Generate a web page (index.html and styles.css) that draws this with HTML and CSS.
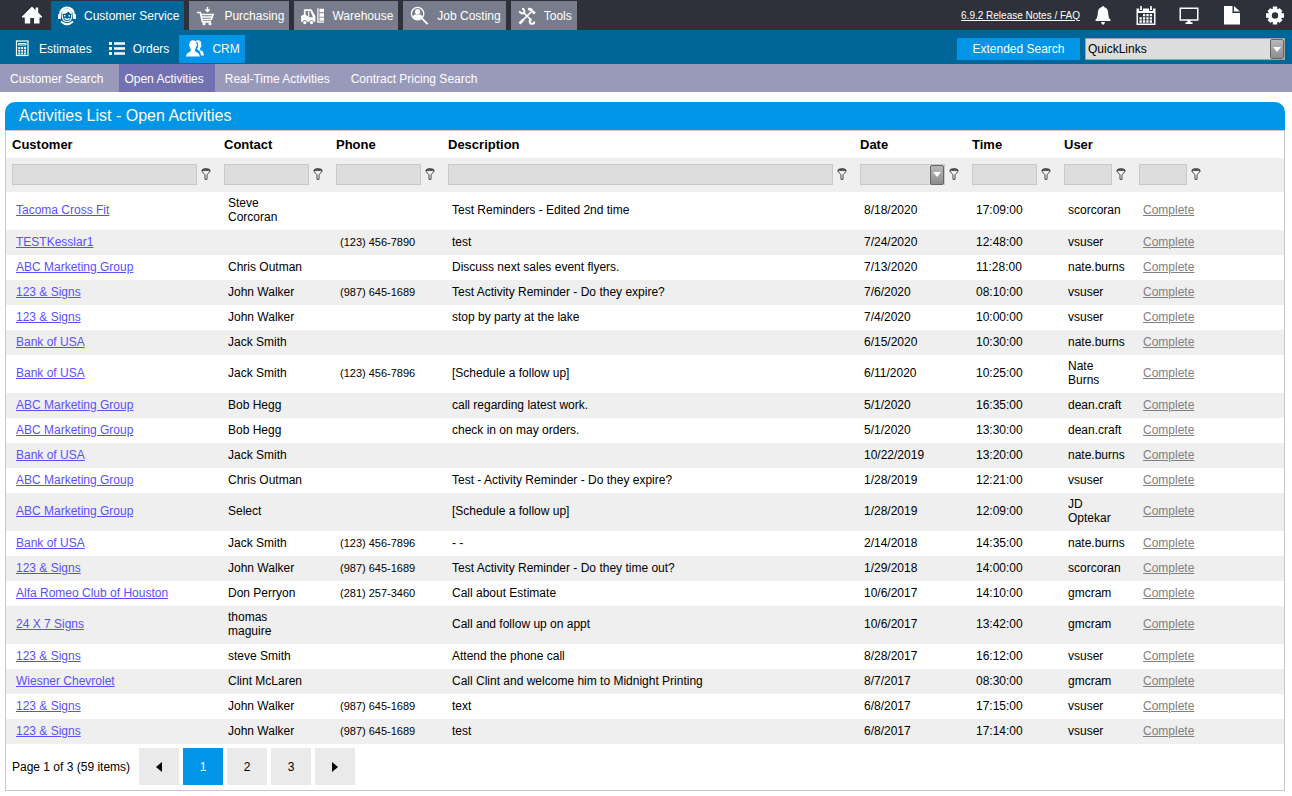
FILE: index.html
```html
<!DOCTYPE html>
<html lang="en">
<head>
    <meta charset="UTF-8">
    <meta name="viewport" content="width=device-width, initial-scale=1.0">
    <title>Open Activities</title>
    <link rel="stylesheet" href="styles.css">
</head>
<body>
    <!-- shared symbols -->
    <svg class="symbols" aria-hidden="true">
        <symbol id="filter" viewBox="0 0 10 12">
            <ellipse cx="5" cy="2.6" rx="4.2" ry="2" fill="#555" stroke="#444" stroke-width="0.8"/>
            <path d="M0.8 3L4 6.8v4.6h2V6.8L9.2 3" fill="#fff" stroke="#444" stroke-width="1"/>
            <path d="M2.5 3.2q2.5 1.6 5 0" fill="none" stroke="#ddd" stroke-width="0.8"/>
        </symbol>
    </svg>

    <header class="topbar">
        <a class="home" href="#" aria-label="Home">
            <svg width="20" height="18" viewBox="0 0 20 18"><path fill="#fff" d="M10 0.500l3.600 3.700V1.500h2.600v5L20 10.500v1h-2.500v6H12V12H8.200v5.500H2.800v-6H0v-1z"/></svg>
        </a>
        <nav class="tabs">
            <a class="tab active" href="#">
                <svg width="18" height="20" viewBox="0 0 18 20" fill="none" stroke="#fff">
                    <path d="M2.300 9V8a6.700 6.500 0 0 1 13.400 0v1" stroke-width="2.200"/>
                    <path d="M4.500 7.500q4 .2 6-2.500 1 2 3 2.500l-.5-3L9 3 5 4.500z" fill="#fff" stroke-width="1"/>
                    <path d="M1.500 8v5M16.500 8v5" stroke-width="2.800"/>
                    <path d="M4.300 8.500v2.500q.7 4.500 4.700 4.500t4.700-4.500V8.500" stroke-width="1.200"/>
                    <path d="M6.500 12.300q2.500 2.400 5 0" stroke-width="1.200"/>
                    <path d="M6.800 9v1.500M11.200 9v1.500" stroke-width="1.300"/>
                    <path d="M3 15.500q6 5.500 12 0" stroke-width="1.700"/>
                </svg>
                Customer Service
            </a>
            <a class="tab" href="#">
                <svg width="20" height="20" viewBox="0 0 20 20" fill="none" stroke="#fff">
                    <path d="M11.500 1v4.500M9.300 3.500l2.200 2 2.200-2" stroke-width="1.500"/>
                    <path d="M1 6.500h3.300l2.200 9.300h8.500" stroke-width="1.700"/>
                    <path d="M4.800 8.500H17l-1.600 5H6.200M5.500 11h10.700" stroke-width="1.700"/>
                    <circle cx="8" cy="17.800" r="1.500" fill="#fff" stroke="none"/>
                    <circle cx="14" cy="17.800" r="1.500" fill="#fff" stroke="none"/>
                </svg>
                Purchasing
            </a>
            <a class="tab" href="#">
                <svg width="23" height="20" viewBox="0 0 24 20">
                    <path fill="#fff" fill-rule="evenodd" d="M3 3h8l4 7v6h-1.800a2.400 2.400 0 0 0-4.400 0H6.300a2.400 2.400 0 0 0-4.600 0H0V10l3-1.500zM4.800 4.700v4l3.700 2.600h4L9.800 4.700z"/>
                    <path stroke="#fff" stroke-width="1.200" d="M8 5v6"/>
                    <circle cx="4" cy="16.800" r="1.700" fill="#fff"/><circle cx="11" cy="16.800" r="1.700" fill="#fff"/>
                    <path fill="#fff" d="M17 2h1.300v13.700H24V17h-7zM19.300 2.500H24v3.700h-4.700zM19.300 7H24v3.700h-4.700zM19.300 11.500H24v3.500h-4.700z"/>
                </svg>
                Warehouse
            </a>
            <a class="tab" href="#">
                <svg width="19" height="20" viewBox="0 0 20 20">
                    <circle cx="8" cy="7.500" r="6.500" fill="none" stroke="#fff" stroke-width="1.400"/>
                    <circle cx="8" cy="5.500" r="2.800" fill="#fff"/>
                    <path fill="#fff" d="M3 11.500q0-2.500 3-3h4q3 .5 3 3-4 4.500-10 0z"/>
                    <path stroke="#fff" stroke-width="1.900" d="M12.500 12.500l6 6"/>
                </svg>
                Job Costing
            </a>
            <a class="tab" href="#">
                <svg width="18" height="20" viewBox="0 0 18 20" fill="none" stroke="#fff">
                    <path stroke-width="1.700" d="M5 6l8.500 8.500M2 17L13 6"/>
                    <path stroke-width="2" d="M4 2.800A2.300 2.300 0 1 1 1.800 5M16.300 15.500A2.300 2.300 0 1 1 13.500 13.300"/>
                    <path stroke-width="2.600" d="M10 3.200q3.500-.5 4.300 2.300l2.700 1.800"/>
                    <path stroke-width="2.500" d="M1.500 17.500l4-4"/>
                </svg>
                Tools
            </a>
        </nav>
        <div class="tools">
            <a class="release" href="#">6.9.2 Release Notes / FAQ</a>
            <button class="icon-btn" aria-label="Notifications">
                <svg width="20" height="20" viewBox="0 0 20 20"><path fill="#fff" d="M9 1a1 1 0 0 1 2 0q4 1 4.200 6 .2 5 2.300 6.800V15h-15v-1.200Q4.600 12 4.800 7 5 2 9 1zM8 16h4l-1 2.500H9z"/></svg>
            </button>
            <button class="icon-btn" aria-label="Calendar">
                <svg width="20" height="20" viewBox="0 0 20 20">
                    <path fill="#fff" d="M.5 2.500h19V19H.5z"/>
                    <path fill="#2e313a" d="M2 7h16v10.500H2z"/>
                    <path stroke="#2e313a" d="M3.500 2v2.500h3V2M13.500 2v2.500h3V2" fill="none"/>
                    <path stroke="#fff" stroke-width="1.600" d="M5 0v3.500M15 0v3.500"/>
                    <path stroke="#fff" stroke-width="2.300" stroke-dasharray="2.300 1.100" d="M7 9.200h10M3.500 12.400h13.500M3.500 15.500h13.500"/>
                </svg>
            </button>
            <button class="icon-btn" aria-label="Display">
                <svg width="20" height="20" viewBox="0 0 20 20"><path fill="#fff" fill-rule="evenodd" d="M.5 1.500h19v13.300h-8v1.500h2V18h-7v-1.700h2v-1.500h-8zM2 3v10.300h16V3z"/></svg>
            </button>
            <button class="icon-btn" aria-label="Documents">
                <svg width="20" height="20" viewBox="0 0 20 20"><path fill="#fff" d="M2 0h8.500v7H18v11.500H2zM12 0l6 5.500h-6z"/></svg>
            </button>
            <button class="icon-btn" aria-label="Settings">
                <svg width="20" height="20" viewBox="0 0 20 20">
                    <g stroke="#fff" stroke-width="4.400"><path d="M10 .5v18M1 9.500h18M4 3.500l12 12M16 3.500l-12 12"/></g>
                    <circle cx="10" cy="9.500" r="7" fill="#fff"/><circle cx="10" cy="9.500" r="3.200" fill="#2e313a"/>
                </svg>
            </button>
        </div>
    </header>

    <div class="subbar">
        <nav class="tabs">
            <a class="sub" href="#">
                <svg width="17" height="18" viewBox="0 0 17 18">
                    <rect x="2.500" y="1" width="11.500" height="14.500" fill="none" stroke="#fff" stroke-width="1.200"/>
                    <path stroke="#fff" d="M4.500 3.500h7.500v1.500h-7.500z" fill="none"/>
                    <path stroke="#fff" stroke-width="1.900" stroke-dasharray="1.900 1" d="M4.300 8h8M4.300 10.800h8M4.300 13.500h8"/>
                </svg>
                Estimates
            </a>
            <a class="sub" href="#">
                <svg width="16" height="18" viewBox="0 0 16 18"><path fill="#fff" d="M0 2h3v3H0zM5 2.300h11v2.400H5zM0 7h3v3H0zM5 7.300h11v2.400H5zM0 12h3v3H0zM5 12.300h11v2.400H5z"/></svg>
                Orders
            </a>
            <a class="sub active" href="#">
                <svg width="18" height="18" viewBox="0 0 18 18" fill="#fff">
                    <path d="M9.500 1.500q1-1.500 3-1.200 3.200.5 2.500 4.200l.5 1q0 1.500-1 2l-.7 1.600q.5 1.600 3.200 2.400l1 4h-3L14 11.500l-3-2.500q2-3 .5-6.500z"/>
                    <path d="M3.500 4Q3.500.3 7 .3T10.500 4q.8.500.3 1.800l-.7 1Q10 8.600 9 9.600q-.3 1.600 1.300 2.300 3.200 1 3.500 4.600H0q.2-3.500 3.500-4.600 1.800-.8 1.400-2.300-1-1-1.200-2.800l-.6-1q-.3-1.300.4-1.800z"/>
                </svg>
                CRM
            </a>
        </nav>
        <div class="search">
            <button class="ext-btn">Extended Search</button>
            <div class="quick">
                <select aria-label="QuickLinks">
                    <option>QuickLinks</option>
                </select>
                <span class="drop"></span>
            </div>
        </div>
    </div>

    <nav class="menu">
        <a href="#">Customer Search</a>
        <a class="active" href="#">Open Activities</a>
        <a href="#">Real-Time Activities</a>
        <a href="#">Contract Pricing Search</a>
    </nav>

    <main class="panel">
        <h1>Activities List - Open Activities</h1>
        <div class="grid">
            <table>
                <colgroup>
                    <col class="c-customer"><col class="c-mid"><col class="c-mid"><col>
                    <col class="c-mid"><col class="c-time"><col class="c-user"><col class="c-action">
                </colgroup>
                <thead>
                    <tr>
                        <th>Customer</th>
                        <th>Contact</th>
                        <th>Phone</th>
                        <th>Description</th>
                        <th>Date</th>
                        <th>Time</th>
                        <th>User</th>
                        <th></th>
                    </tr>
                    <tr class="filters" id="filters"></tr>
                </thead>
                <tbody id="rows"></tbody>
            </table>
            <div class="pager">
                <span>Page 1 of 3 (59 items)</span>
                <button aria-label="Previous"><svg width="6" height="10" viewBox="0 0 6 10"><path d="M6 0v10L0 5z"/></svg></button>
                <button class="current">1</button>
                <button>2</button>
                <button>3</button>
                <button aria-label="Next"><svg width="6" height="10" viewBox="0 0 6 10"><path d="M0 0v10l6-5z"/></svg></button>
            </div>
        </div>
    </main>

    <script>
        // customer, contact, phone, description, date, time, user
        const activities = [
            ['Tacoma Cross Fit', 'Steve Corcoran', '', 'Test Reminders - Edited 2nd time', '8/18/2020', '17:09:00', 'scorcoran'],
            ['TESTKesslar1', '', '(123) 456-7890', 'test', '7/24/2020', '12:48:00', 'vsuser'],
            ['ABC Marketing Group', 'Chris Outman', '', 'Discuss next sales event flyers.', '7/13/2020', '11:28:00', 'nate.burns'],
            ['123 & Signs', 'John Walker', '(987) 645-1689', 'Test Activity Reminder - Do they expire?', '7/6/2020', '08:10:00', 'vsuser'],
            ['123 & Signs', 'John Walker', '', 'stop by party at the lake', '7/4/2020', '10:00:00', 'vsuser'],
            ['Bank of USA', 'Jack Smith', '', '', '6/15/2020', '10:30:00', 'nate.burns'],
            ['Bank of USA', 'Jack Smith', '(123) 456-7896', '[Schedule a follow up]', '6/11/2020', '10:25:00', 'Nate Burns'],
            ['ABC Marketing Group', 'Bob Hegg', '', 'call regarding latest work.', '5/1/2020', '16:35:00', 'dean.craft'],
            ['ABC Marketing Group', 'Bob Hegg', '', 'check in on may orders.', '5/1/2020', '13:30:00', 'dean.craft'],
            ['Bank of USA', 'Jack Smith', '', '', '10/22/2019', '13:20:00', 'nate.burns'],
            ['ABC Marketing Group', 'Chris Outman', '', 'Test - Activity Reminder - Do they expire?', '1/28/2019', '12:21:00', 'vsuser'],
            ['ABC Marketing Group', 'Select', '', '[Schedule a follow up]', '1/28/2019', '12:09:00', 'JD Optekar'],
            ['Bank of USA', 'Jack Smith', '(123) 456-7896', '- -', '2/14/2018', '14:35:00', 'nate.burns'],
            ['123 & Signs', 'John Walker', '(987) 645-1689', 'Test Activity Reminder - Do they time out?', '1/29/2018', '14:00:00', 'scorcoran'],
            ['Alfa Romeo Club of Houston', 'Don Perryon', '(281) 257-3460', 'Call about Estimate', '10/6/2017', '14:10:00', 'gmcram'],
            ['24 X 7 Signs', 'thomas maguire', '', 'Call and follow up on appt', '10/6/2017', '13:42:00', 'gmcram'],
            ['123 & Signs', 'steve Smith', '', 'Attend the phone call', '8/28/2017', '16:12:00', 'vsuser'],
            ['Wiesner Chevrolet', 'Clint McLaren', '', 'Call Clint and welcome him to Midnight Printing', '8/7/2017', '08:30:00', 'gmcram'],
            ['123 & Signs', 'John Walker', '(987) 645-1689', 'text', '6/8/2017', '17:15:00', 'vsuser'],
            ['123 & Signs', 'John Walker', '(987) 645-1689', 'test', '6/8/2017', '17:14:00', 'vsuser']
        ];
        const columns = ['Customer', 'Contact', 'Phone', 'Description', 'Date', 'Time', 'User', 'Action'];

        // filter row, the date column has a drop-down button
        document.getElementById('filters').innerHTML = columns.map(name => `
            <td><div class="filter">
                <div class="box"><input type="text" aria-label="${name} filter">${name === 'Date' ? '<button class="drop" aria-label="Pick date"></button>' : ''}</div>
                <svg width="10" height="12"><use href="#filter"/></svg>
            </div></td>`).join('');

        document.getElementById('rows').innerHTML = activities.map(a => `
            <tr>
                <td><a href="#">${a[0].replace('&', '&amp;')}</a></td>
                <td class="contact">${a[1]}</td>
                <td class="phone">${a[2]}</td>
                <td>${a[3]}</td>
                <td>${a[4]}</td>
                <td>${a[5]}</td>
                <td>${a[6]}</td>
                <td><a class="complete" href="#">Complete</a></td>
            </tr>`).join('');
    </script>
</body>
</html>
```
FILE: styles.css
```css
* {
    box-sizing: border-box;
}

body {
    margin: 0;
    font-family: "Liberation Sans", Arial, sans-serif;
    font-size: 12px;
    line-height: 14px;
    color: #000;
    background-color: #fff;
}

button, input, select {
    font: inherit;
    margin: 0;
    padding: 0;
    border: none;
    border-radius: 0;
}

button {
    cursor: pointer;
}

svg {
    display: block;
    flex: none;
}

.symbols {
    display: none;
}

/* top bar */
.topbar {
    display: flex;
    height: 30px;
    padding-top: 1px;
    background-color: #2e313a;
}

.home {
    padding: 5px 9px 0 22px;
}

.tabs {
    display: flex;
    gap: 5px;
}

.tab, .sub {
    display: flex;
    align-items: center;
    gap: 8px;
    padding: 0 5px 0 7px;
    color: #fff;
    text-decoration: none;
    white-space: nowrap;
}

.tab {
    background-color: #777d8c;
}

.tab.active {
    background-color: #006699;
}

.tools {
    display: flex;
    align-items: center;
    gap: 23px;
    margin-left: auto;
    padding-right: 7px;
}

.release {
    margin-right: -10px;
    color: #fff;
    font-size: 10px;
    white-space: nowrap;
}

.icon-btn {
    background: none;
}

/* second bar */
.subbar {
    display: flex;
    height: 34px;
    padding: 5px 7px 1px;
    background-color: #006699;
}

.sub.active {
    background-color: #0095e6;
}

.search {
    display: flex;
    align-items: center;
    gap: 5px;
    margin-left: auto;
}

.ext-btn {
    width: 123px;
    height: 22px;
    color: #fff;
    background-color: #0095e6;
}

.quick {
    position: relative;
    width: 200px;
}

.quick select {
    display: block;
    width: 100%;
    height: 22px;
    padding: 0 2px;
    border: 1px solid #a0a0a0;
    color: #000;
    background-color: #ddd;
    appearance: none;
}

.quick .drop {
    position: absolute;
    top: 1px;
    right: 1px;
    pointer-events: none;
}

.drop {
    display: flex;
    flex: none;
    align-items: center;
    justify-content: center;
    width: 14px;
    height: 20px;
    border: 1px solid #666;
    border-radius: 2px;
    background: linear-gradient(#b8b8b8, #8e8e8e);
}

.drop::after {
    content: "";
    border: 4px solid transparent;
    border-top: 5px solid #fff;
    border-bottom: none;
}

/* third bar */
.menu {
    display: flex;
    gap: 5px;
    height: 28px;
    padding-left: 5px;
    background-color: #9999bb;
}

.menu a {
    padding: 8px 11px 0 5px;
    color: #fff;
    text-decoration: none;
    white-space: nowrap;
}

.menu a.active {
    background-color: #7272b3;
}

/* activities list */
.panel {
    margin: 10px 7px 5px 5px;
}

h1 {
    margin: 0;
    padding-left: 14px;
    border-radius: 10px 10px 0 0;
    color: #fff;
    background-color: #0095e6;
    font-size: 16px;
    font-weight: normal;
    line-height: 28px;
}

.grid {
    border: 1px solid #c8c8c8;
}

table {
    width: 100%;
    table-layout: fixed;
    border-collapse: collapse;
}

.c-customer {
    width: 212px;
}

.c-mid {
    width: 112px;
}

.c-time {
    width: 92px;
}

.c-user {
    width: 75px;
}

.c-action {
    width: 151px;
}

th {
    height: 27px;
    padding: 0 6px;
    font-size: 13px;
    text-align: left;
}

td {
    height: 25px;
    padding: 4px 6px 6px 10px;
}

td.contact {
    padding-right: 26px;
}

.phone {
    font-size: 11px;
}

tbody tr:nth-child(even), .filters {
    background-color: #efefef;
}

tbody a {
    color: #5a4fff;
}

tbody a.complete {
    color: #808080;
}

.filters td {
    height: 34px;
    padding: 0 7px 2px 6px;
}

.filter {
    display: flex;
    align-items: center;
    gap: 4px;
}

.filters td:last-child .filter {
    width: 62px;
}

.box {
    display: flex;
    flex: 1;
    min-width: 0;
    height: 21px;
    border: 1px solid #c8c8c8;
    background-color: #ddd;
}

.box input {
    flex: 1;
    min-width: 0;
    background: none;
}

/* pager */
.pager {
    display: flex;
    align-items: center;
    gap: 4px;
    height: 46px;
    padding: 0 6px 1px;
}

.pager span {
    margin-right: 5px;
}

.pager button {
    display: flex;
    align-items: center;
    justify-content: center;
    width: 40px;
    height: 37px;
    background-color: #eaeaea;
}

.pager button.current {
    color: #fff;
    background-color: #0095e6;
}
```
